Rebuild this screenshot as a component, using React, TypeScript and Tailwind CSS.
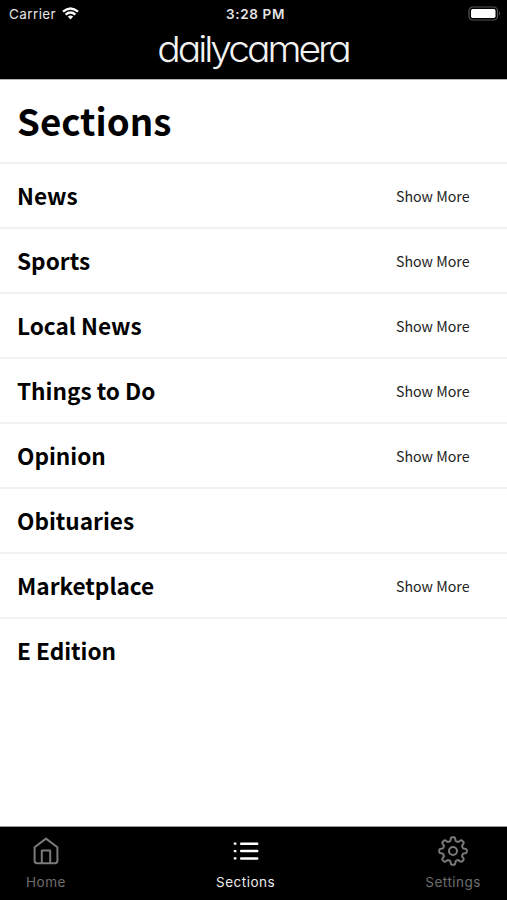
const sections = [
  { name: 'News', more: true },
  { name: 'Sports', more: true },
  { name: 'Local News', more: true },
  { name: 'Things to Do', more: true },
  { name: 'Opinion', more: true },
  { name: 'Obituaries', more: false },
  { name: 'Marketplace', more: true },
  { name: 'E Edition', more: false },
];

// Eight-lobed gear outline, sampled around a circle centred on (15, 15).
const gearPath =
  Array.from({ length: 192 }, (_, i) => {
    const t = (i / 192) * Math.PI * 2;
    const r = 12 + (1.8 * Math.tanh(2.2 * Math.cos(8 * t))) / Math.tanh(2.2);
    return `${i ? 'L' : 'M'}${(15 + r * Math.cos(t)).toFixed(2)} ${(15 + r * Math.sin(t)).toFixed(2)}`;
  }).join('') + 'Z';

function StatusBar() {
  return (
    <div className="grid h-[27px] grid-cols-3 items-center pl-[9px] pr-[6px] text-[13.5px] text-[#e4e4e4]">
      <div className="flex items-center gap-[6px]">
        <span className="pt-px tracking-[0.4px]">Carrier</span>
        <svg width="17" height="13" viewBox="0 0 17 13" fill="none" stroke="#fff" strokeWidth="2.3">
          <path d="M1 4.7Q8.5-1.7 16 4.7" />
          <path d="M3.6 7.6Q8.5 3.5 13.4 7.6" />
          <path d="M8.5 12.4 5.8 9.6Q8.5 7.3 11.2 9.6Z" fill="#fff" stroke="none" />
        </svg>
      </div>
      <span className="pt-px pl-px text-center font-semibold tracking-[0.65px]">3:28 PM</span>
      <svg className="justify-self-end" width="33" height="15" viewBox="0 0 33 15">
        <rect x="1" y="1" width="28.5" height="13" rx="3.8" fill="none" stroke="#555" strokeWidth="1.2" />
        <rect x="3" y="3" width="24.5" height="9" rx="1.7" fill="#fff" />
        <path d="M31 5.2Q33 7.5 31 9.8Z" fill="#555" />
      </svg>
    </div>
  );
}

function HomeIcon() {
  return (
    <svg width="28" height="30" viewBox="0 0 28 30" fill="none" stroke="#7a7a7a" strokeWidth="2" strokeLinejoin="round">
      <path d="M2.6 11.2 14 2.6 25.4 11.2V24.8Q25.4 27.2 23 27.2H5Q2.6 27.2 2.6 24.8Z" />
      <path d="M9.8 27V14.5H18.2V27" />
    </svg>
  );
}

function ListIcon() {
  return (
    <svg width="28" height="30" viewBox="0 0 28 30" stroke="#fff" strokeWidth="2.3">
      <path d="M1.8 7.7H4.4M1.8 15.1H4.4M1.8 22.4H4.4" />
      <path d="M9.2 7.7H25.2M9.2 15.1H25.2M9.2 22.4H25.2" strokeWidth="2.5" strokeLinecap="round" />
    </svg>
  );
}

function GearIcon() {
  return (
    <svg width="30" height="30" viewBox="0 0 30 30" fill="none" stroke="#7a7a7a" strokeWidth="2" strokeLinejoin="round">
      <circle cx="15" cy="15" r="4" />
      <path d={gearPath} />
    </svg>
  );
}

export default function App() {
  return (
    <div className="flex h-[900px] w-[507px] flex-col overflow-hidden bg-white font-['Inter',sans-serif]">
      <header className="h-[79px] shrink-0 bg-black">
        <StatusBar />
        <div className="flex h-[46px] items-center justify-center">
          <span className="origin-center scale-x-[1.1] whitespace-nowrap text-[35.5px] leading-none font-[350] tracking-[-2.8px] text-[#f2f2f2] [font-feature-settings:'cv11','ss03']">
            dailycamera
          </span>
        </div>
      </header>
      <main className="flex-1 border-t border-[#b5b5b5] bg-white font-['Noto_Sans_CJK_JP','Noto_Sans_CJK_SC',sans-serif] text-black">
        <h1 className="flex h-[81.6px] items-center pb-px pl-[17px] text-[36.7px] leading-none font-bold">Sections</h1>
        <ul>
          {sections.map((s) => (
            <li key={s.name} className="flex h-[65.07px] items-center justify-between border-t-2 border-[#f1f1f1] pt-[2px] pl-[17px] pr-[37.5px]">
              <span className="text-[22.6px] leading-none font-bold">{s.name}</span>
              {s.more && <span className="text-[14.2px] leading-none text-[#222]">Show More</span>}
            </li>
          ))}
        </ul>
      </main>
      <nav className="flex h-[74px] shrink-0 justify-between border-t border-[#999] bg-black px-[26px] pt-[9px] text-[13.5px] leading-none tracking-[0.5px] text-[#6e6e6e]">
        <div className="flex flex-col items-center gap-[10px]">
          <HomeIcon />
          <span>Home</span>
        </div>
        <div className="flex flex-col items-center gap-[10px] text-[#ececec]">
          <ListIcon />
          <span>Sections</span>
        </div>
        <div className="flex flex-col items-center gap-[10px]">
          <GearIcon />
          <span>Settings</span>
        </div>
      </nav>
    </div>
  );
}
